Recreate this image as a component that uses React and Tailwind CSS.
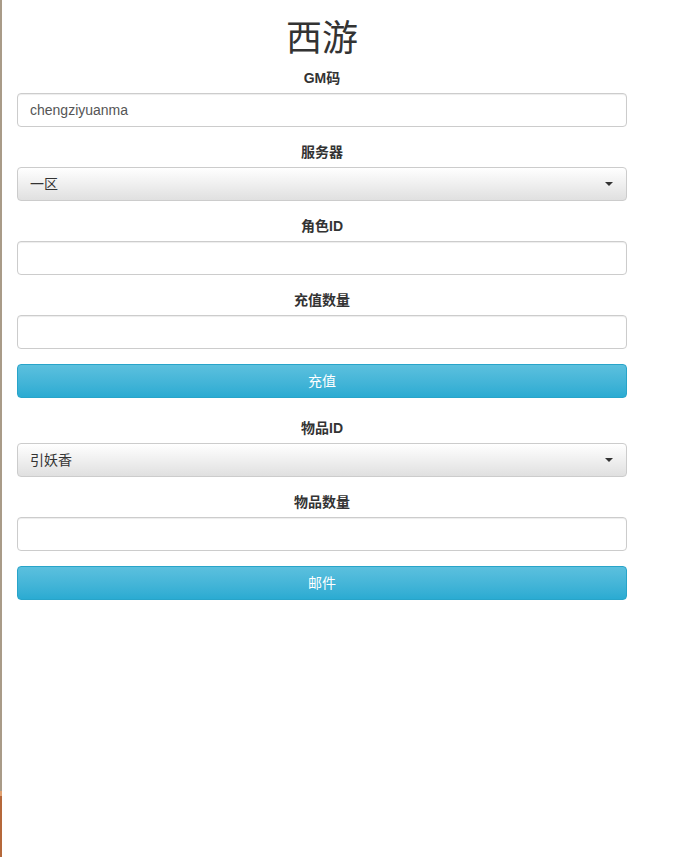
import React from 'react'

const font = { fontFamily: '"Liberation Sans", "Noto Sans CJK SC", sans-serif' }

function Label({ children }) {
  return (
    <label className="block text-center text-[14px] leading-[20px] font-bold text-[#333] mb-[5px]">
      {children}
    </label>
  )
}

function TextInput({ value }) {
  return (
    <input
      type="text"
      defaultValue={value}
      className="block w-full h-[34px] px-[12px] text-[14px] text-[#555] bg-white border border-[#ccc] rounded-[4px] shadow-[inset_0_1px_1px_rgba(0,0,0,0.075)] outline-none"
    />
  )
}

function Select({ options }) {
  return (
    <div className="relative">
      <select className="block w-full h-[34px] pl-[12px] pr-8 text-[14px] text-[#333] appearance-none border border-[#ccc] rounded-[4px] bg-gradient-to-b from-white to-[#e0e0e0] outline-none">
        {options.map((o) => (
          <option key={o}>{o}</option>
        ))}
      </select>
      <span className="absolute right-[14px] top-[15px] w-0 h-0 border-x-[4px] border-x-transparent border-t-[4px] border-t-[#333] pointer-events-none" />
    </div>
  )
}

function Button({ children }) {
  return (
    <button className="block w-full h-[34px] text-[14px] text-white border border-[#28a4c9] rounded-[4px] bg-gradient-to-b from-[#5bc0de] to-[#2aabd2]">
      {children}
    </button>
  )
}

export default function App() {
  return (
    <div className="flex min-h-[857px] bg-white" style={font}>
      <div className="w-[2px] flex flex-col shrink-0">
        <div className="h-[791px] bg-[#a99b88]" />
        <div className="h-[5px] bg-[#e0a070]" />
        <div className="flex-1 bg-[#b5683a]" />
      </div>
      <div className="pl-[15px] w-[625px]">
        <h1 className="text-center text-[36px] leading-[40px] text-[#333] mt-[19px] mb-[9px]">西游</h1>

        <div className="mb-[15px]">
          <Label>GM码</Label>
          <TextInput value="chengziyuanma" />
        </div>
        <div className="mb-[15px]">
          <Label>服务器</Label>
          <Select options={['一区', '二区']} />
        </div>
        <div className="mb-[15px]">
          <Label>角色ID</Label>
          <TextInput value="" />
        </div>
        <div className="mb-[15px]">
          <Label>充值数量</Label>
          <TextInput value="" />
        </div>
        <div className="mb-[20px]">
          <Button>充值</Button>
        </div>

        <div className="mb-[15px]">
          <Label>物品ID</Label>
          <Select options={['引妖香']} />
        </div>
        <div className="mb-[15px]">
          <Label>物品数量</Label>
          <TextInput value="" />
        </div>
        <Button>邮件</Button>
      </div>
    </div>
  )
}
